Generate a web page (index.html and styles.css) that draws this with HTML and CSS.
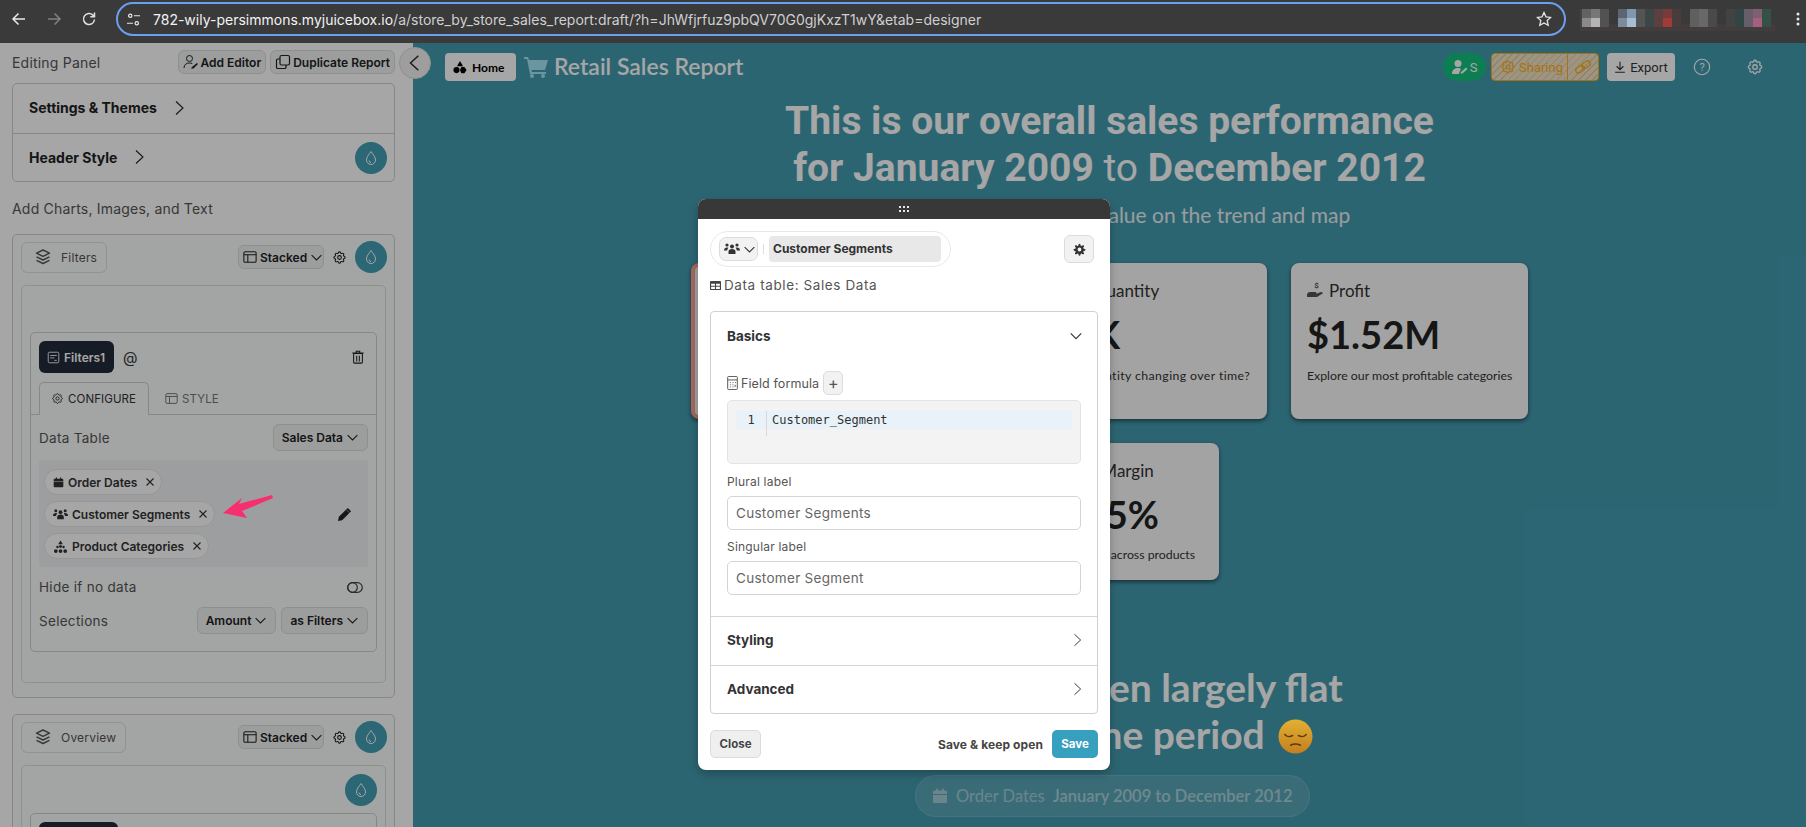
FILE: index.html
```html
<!DOCTYPE html>
<html lang="en">
<head>
<meta charset="utf-8">
<title>Retail Sales Report</title>
<link rel="stylesheet" href="styles.css">
</head>
<body>
<svg class="sprite" aria-hidden="true">
  <symbol id="chev-d" viewBox="0 0 16 16"><path d="M2 5l6 6 6-6" fill="none" stroke="currentColor" stroke-width="1.300"/></symbol>
  <symbol id="chev-r" viewBox="0 0 16 16"><path d="M4 1.500l7 6.500-7 6.500" fill="none" stroke="currentColor" stroke-width="1.100"/></symbol>
  <symbol id="drop" viewBox="0 0 16 16"><path d="M8 1.500C6 4.500 3.500 7 3.500 10a4.500 4.500 0 0 0 9 0C12.500 7 10 4.500 8 1.500z" fill="none" stroke="currentColor" stroke-width="1"/><path d="M6 10.500a2 2 0 0 0 2 2" fill="none" stroke="currentColor" stroke-width="1"/></symbol>
  <symbol id="layers" viewBox="0 0 16 16"><g fill="none" stroke="currentColor" stroke-width="1.400" stroke-linejoin="round"><path d="M8 1L1.500 4.200 8 7.400l6.500-3.200z"/><path d="M1.500 7.800L8 11l6.500-3.200"/><path d="M1.500 11.300L8 14.500l6.500-3.200"/></g></symbol>
  <symbol id="layout" viewBox="0 0 16 16"><g fill="none" stroke="currentColor" stroke-width="1.200"><rect x="1" y="2" width="14" height="12" rx="1.500"/><path d="M1 5.500h14M5.500 5.500V14"/></g></symbol>
  <symbol id="gear" viewBox="0 0 24 24"><g fill="none" stroke="currentColor" stroke-width="1.700"><path d="M10.325 4.317c.426-1.756 2.924-1.756 3.350 0a1.724 1.724 0 0 0 2.573 1.066c1.543-.94 3.310.826 2.370 2.370a1.724 1.724 0 0 0 1.065 2.572c1.756.426 1.756 2.924 0 3.350a1.724 1.724 0 0 0-1.066 2.573c.94 1.543-.826 3.310-2.370 2.370a1.724 1.724 0 0 0-2.572 1.065c-.426 1.756-2.924 1.756-3.350 0a1.724 1.724 0 0 0-2.573-1.066c-1.543.94-3.310-.826-2.370-2.370a1.724 1.724 0 0 0-1.065-2.572c-1.756-.426-1.756-2.924 0-3.350a1.724 1.724 0 0 0 1.066-2.573c-.94-1.543.826-3.310 2.370-2.370c1 .608 2.296.07 2.572-1.065z"/><circle cx="12" cy="12" r="3"/></g></symbol>
  <symbol id="gear-solid" viewBox="0 0 24 24"><path fill="currentColor" fill-rule="evenodd" d="M10.325 2.800c.426-1.756 2.924-1.756 3.350 0l.3 1.400a1.724 1.724 0 0 0 2.573 1.066l1.200-.8c1.543-.94 3.310.826 2.370 2.370l-.8 1.200a1.724 1.724 0 0 0 1.065 2.572l1.400.3c1.756.426 1.756 2.924 0 3.350l-1.400.3a1.724 1.724 0 0 0-1.066 2.573l.8 1.200c.94 1.543-.826 3.310-2.370 2.370l-1.200-.8a1.724 1.724 0 0 0-2.572 1.065l-.3 1.400c-.426 1.756-2.924 1.756-3.350 0l-.3-1.400a1.724 1.724 0 0 0-2.573-1.066l-1.200.8c-1.543.94-3.310-.826-2.370-2.370l.8-1.200a1.724 1.724 0 0 0-1.065-2.572l-1.400-.3c-1.756-.426-1.756-2.924 0-3.350l1.400-.3a1.724 1.724 0 0 0 1.066-2.573l-.8-1.200c-.94-1.543.826-3.310 2.370-2.370l1.200.8a1.724 1.724 0 0 0 2.572-1.065zM12 8.500a3.500 3.500 0 1 0 0 7 3.500 3.500 0 0 0 0-7z"/></symbol>
  <symbol id="x" viewBox="0 0 10 10"><path d="M1.500 1.500l7 7m0-7l-7 7" stroke="currentColor" stroke-width="1.100"/></symbol>
  <symbol id="users" viewBox="0 0 16 16"><g fill="currentColor"><circle cx="8" cy="5.500" r="2"/><circle cx="3" cy="4" r="1.600"/><circle cx="13" cy="4" r="1.600"/><path d="M4.500 13v-2.500c0-1.500 1.200-2.500 3.500-2.500s3.500 1 3.500 2.500V13z"/><path d="M0 9.500C0 7.500 1.200 6.500 3 6.500c.6 0 1.100.1 1.500.3-.8.700-1.200 1.600-1.300 2.700zM16 9.500c0-2-1.200-3-3-3-.6 0-1.100.1-1.500.3.800.7 1.200 1.600 1.300 2.700z"/></g></symbol>
  <symbol id="cubes" viewBox="0 0 16 16"><g fill="currentColor"><path d="M8 1.500l2.500 4h-5z"/><circle cx="8" cy="8" r="1.500"/><circle cx="4.800" cy="8.500" r="1.300"/><circle cx="11.200" cy="8.500" r="1.300"/><circle cx="3" cy="12.800" r="2"/><circle cx="8" cy="12.800" r="2"/><circle cx="13" cy="12.800" r="2"/></g></symbol>
  <symbol id="shapes" viewBox="0 0 16 16"><g fill="currentColor"><path d="M8 1l3.500 6h-7z"/><circle cx="4" cy="11.500" r="3.500"/><path d="M9.500 8h3.500l2.500 3.500-2.500 3.500H9.500L8 11.500z"/></g></symbol>
  <symbol id="cal" viewBox="0 0 16 16"><path fill="currentColor" d="M4 .800h1.800V2.500h4.400V.800H12v1.700h1.500c.8 0 1.500.7 1.500 1.500V6H1V4c0-.8.700-1.500 1.500-1.500H4zM1 7h14v6.500c0 .8-.7 1.500-1.500 1.500h-11C1.700 15 1 14.300 1 13.500z"/></symbol>
  <symbol id="caret-doc" viewBox="0 0 16 16"><g fill="none" stroke="currentColor" stroke-width="1.100"><rect x="1.500" y="1.500" width="13" height="13" rx="1.500"/><path d="M4 5.500h8M4 8.500h3M9 11.500h3M7 8.500l2 0"/></g></symbol>
</svg>

<header class="browser">
  <div class="nav">
    <svg class="nav-ic" viewBox="0 0 16 16"><path d="M14 8H2.500M7.500 2.500L2 8l5.500 5.500" fill="none" stroke="#e8e8e8" stroke-width="1.500"/></svg>
    <svg class="nav-ic" viewBox="0 0 16 16"><path d="M2 8h11.500M8.500 2.500L14 8l-5.500 5.500" fill="none" stroke="#808080" stroke-width="1.500"/></svg>
    <svg class="nav-ic" viewBox="0 0 16 16"><path d="M13.500 8.500a5.500 5.500 0 1 1-1.600-4.400L13.500 5.700M13.500 1.500v4.200H9.300" fill="none" stroke="#e0e0e0" stroke-width="1.500"/></svg>
  </div>
  <div class="urlbar">
    <svg class="tune" viewBox="0 0 16 16"><g fill="none" stroke="#e8e8e8" stroke-width="1.300"><circle cx="4.500" cy="4" r="1.800"/><path d="M8.500 4H15M1 12h6.500"/><circle cx="11.500" cy="12" r="1.800"/></g></svg>
    <div class="url"><span class="url-host">782-wily-persimmons.myjuicebox.io</span><span class="url-path">/a/store_by_store_sales_report:draft/?h=JhWfjrfuz9pbQV70G0gjKxzT1wY&amp;etab=designer</span></div>
    <svg class="star" viewBox="0 0 16 16"><path d="M8 1.500l2 4.400 4.700.5-3.500 3.200 1 4.700L8 11.900l-4.200 2.400 1-4.700L1.300 6.400 6 5.900z" fill="none" stroke="#e8e8e8" stroke-width="1.300"/></svg>
  </div>
  <svg class="exts" width="196" height="32" viewBox="0 0 196 32">
    <rect x="0" y="24" width="195" height="7" fill="#433c3c"/>
    <rect x="-7" y="9" width="9" height="18" fill="#444"/>
    <rect x="2" y="9" width="9" height="9" fill="#636363"/><rect x="11" y="9" width="9" height="9" fill="#777"/><rect x="2" y="18" width="9" height="9" fill="#8a8a8a"/><rect x="11" y="18" width="9" height="9" fill="#b4b4b4"/><rect x="20" y="9" width="9" height="18" fill="#525252"/>
    <rect x="38" y="9" width="9" height="9" fill="#5c6672"/><rect x="47" y="9" width="9" height="9" fill="#7e98b4"/><rect x="38" y="18" width="9" height="9" fill="#7d8c9c"/><rect x="47" y="18" width="9" height="9" fill="#a8bed2"/><rect x="56" y="9" width="9" height="18" fill="#545454"/><rect x="65" y="9" width="9" height="18" fill="#3d4646"/>
    <rect x="74" y="9" width="9" height="18" fill="#5c3f3f"/><rect x="83" y="9" width="9" height="9" fill="#763c3c"/><rect x="83" y="18" width="9" height="9" fill="#a23a3a"/><rect x="92" y="9" width="9" height="18" fill="#483c3c"/>
    <rect x="110" y="9" width="9" height="18" fill="#5f5f5f"/><rect x="119" y="9" width="9" height="18" fill="#686868"/><rect x="128" y="9" width="9" height="18" fill="#4a4a4a"/>
    <rect x="146" y="9" width="9" height="18" fill="#424242"/><rect x="155" y="9" width="9" height="18" fill="#324545"/><rect x="164" y="9" width="9" height="18" fill="#665e68"/><rect x="173" y="9" width="9" height="9" fill="#805f72"/><rect x="173" y="18" width="9" height="9" fill="#a56080"/><rect x="182" y="9" width="9" height="18" fill="#345148"/>
  </svg>
  <svg class="kebab" viewBox="0 0 4 16"><g fill="#e8e8e8"><circle cx="2" cy="3" r="1.500"/><circle cx="2" cy="8" r="1.500"/><circle cx="2" cy="13" r="1.500"/></g></svg>
</header>

<div class="app">
  <aside class="panel">
    <div class="panel-top">
      <span class="muted-title">Editing Panel</span>
      <div class="top-btns">
        <button class="btn btn-sm"><svg class="ic16" viewBox="0 0 16 16"><g fill="none" stroke="currentColor" stroke-width="1"><circle cx="6.500" cy="4.500" r="3"/><path d="M1 14c0-3.500 2.500-5 5.500-5 1 0 2 .2 2.800.6"/></g><path d="M9 13l5-4 1 1-4.500 4.500H8z" fill="currentColor"/></svg>Add Editor</button>
        <button class="btn btn-sm"><svg class="ic16" viewBox="0 0 16 16"><g fill="none" stroke="currentColor" stroke-width="1.200"><rect x="5" y="1.500" width="9.500" height="9.500" rx="1.500"/><path d="M5 5H2.800c-.7 0-1.300.6-1.300 1.300v6.900c0 .7.600 1.300 1.300 1.300h6.900c.7 0 1.300-.6 1.300-1.300V11"/></g></svg>Duplicate Report</button>
      </div>
    </div>

    <section class="box settings">
      <div class="set-row"><strong>Settings &amp; Themes</strong><svg class="chev-r"><use href="#chev-r"/></svg></div>
      <div class="set-row set-row-b"><strong>Header Style</strong><svg class="chev-r"><use href="#chev-r"/></svg><span class="drop drop-end"><svg><use href="#drop"/></svg></span></div>
    </section>

    <p class="muted-title add-title">Add Charts, Images, and Text</p>

    <section class="box stack">
      <div class="stack-head">
        <span class="tab-btn"><svg class="ic16"><use href="#layers"/></svg>Filters</span>
        <button class="btn btn-stacked"><svg class="ic14"><use href="#layout"/></svg>Stacked<svg class="ic-chev"><use href="#chev-d"/></svg></button>
        <svg class="gear-ic"><use href="#gear"/></svg>
        <span class="drop"><svg><use href="#drop"/></svg></span>
      </div>
      <div class="inner inner-filters">
        <div class="widget">
          <div class="widget-head">
            <span class="dark-btn"><svg class="ic13"><use href="#caret-doc"/></svg>Filters1</span>
            <span class="at">@</span>
            <svg class="trash" viewBox="0 0 16 16"><g fill="none" stroke="currentColor" stroke-width="1.200"><path d="M3 4h10v10c0 .6-.4 1-1 1H4c-.6 0-1-.4-1-1zM1.500 3.500h13M6 3V1.500h4V3M6.500 6.500V13M9.500 6.500V13"/></g></svg>
          </div>
          <div class="tabs">
            <span class="tab tab-on"><svg class="ic13"><use href="#gear"/></svg>CONFIGURE</span>
            <span class="tab"><svg class="ic13"><use href="#layout"/></svg>STYLE</span>
          </div>
          <div class="widget-body">
            <div class="field-row"><span class="lbl">Data Table</span><button class="btn btn-sel">Sales Data<svg class="ic-chev"><use href="#chev-d"/></svg></button></div>
            <div class="pills">
              <div class="pill-col">
                <span class="pill"><svg class="ic11"><use href="#cal"/></svg>Order Dates<svg class="ic-x"><use href="#x"/></svg></span>
                <span class="pill"><svg class="ic15"><use href="#users"/></svg>Customer Segments<svg class="ic-x"><use href="#x"/></svg></span>
                <span class="pill"><svg class="ic15"><use href="#cubes"/></svg>Product Categories<svg class="ic-x"><use href="#x"/></svg></span>
              </div>
              <svg class="pencil" viewBox="0 0 16 16"><path d="M11.500 1l3.500 3.500-9.500 9.500L1 15l1-4.500z" fill="currentColor"/><path d="M10 3l3 3" stroke="#a0a2a4" stroke-width="1"/></svg>
            </div>
            <div class="field-row row-hide"><span class="lbl">Hide if no data</span><svg class="toggle" viewBox="0 0 16 11"><g fill="none" stroke="currentColor" stroke-width="1.200"><rect x=".7" y=".7" width="14.600" height="9.600" rx="4.800"/><circle cx="5.500" cy="5.500" r="4.800"/></g></svg></div>
            <div class="field-row row-sel"><span class="lbl">Selections</span><span class="sel-pair"><button class="btn btn-sel">Amount<svg class="ic-chev"><use href="#chev-d"/></svg></button><button class="btn btn-sel">as Filters<svg class="ic-chev"><use href="#chev-d"/></svg></button></span></div>
          </div>
        </div>
      </div>
    </section>

    <section class="box stack stack-two">
      <div class="stack-head">
        <span class="tab-btn"><svg class="ic16"><use href="#layers"/></svg>Overview</span>
        <button class="btn btn-stacked"><svg class="ic14"><use href="#layout"/></svg>Stacked<svg class="ic-chev"><use href="#chev-d"/></svg></button>
        <svg class="gear-ic"><use href="#gear"/></svg>
        <span class="drop"><svg><use href="#drop"/></svg></span>
      </div>
      <div class="inner">
        <div class="inner-drop"><span class="drop"><svg><use href="#drop"/></svg></span></div>
        <div class="widget"><div class="widget-head"><span class="dark-btn dark-wide"></span></div></div>
      </div>
    </section>
  </aside>

  <main class="report">
    <div class="report-bar">
      <button class="home"><svg class="ic14"><use href="#shapes"/></svg>Home</button>
      <svg class="cart" viewBox="0 0 24 22"><path fill="#a6e6f5" d="M0 1h4l1 3h19l-3 10H7.500L8 16h14v2H6L3 3H0z"/><circle cx="8" cy="20" r="2" fill="#a6e6f5"/><circle cx="19" cy="20" r="2" fill="#a6e6f5"/></svg>
      <span class="report-title">Retail Sales Report</span>
      <div class="bar-right">
        <span class="editor"><svg class="ic16" viewBox="0 0 16 16"><circle cx="6" cy="4.500" r="3.500" fill="#fff"/><path d="M0 15c0-4 2.500-6 6-6 1.200 0 2.200.2 3 .7L7.500 13l-.5 2z" fill="#fff"/><path d="M9 13l5-4.500 1.500 1.500-5 4.500H8.500z" fill="#fff"/></svg>S</span>
        <span class="sharing"><span class="share-l"><svg class="ic16"><use href="#gear"/></svg>Sharing</span><span class="share-r"><svg class="ic16" viewBox="0 0 16 16"><g fill="none" stroke="currentColor" stroke-width="1.400"><rect x=".5" y="7.500" width="9" height="5.500" rx="2.750" transform="rotate(-35 5 10.250)"/><rect x="6.500" y="3" width="9" height="5.500" rx="2.750" transform="rotate(-35 11 5.750)"/></g></svg></span></span>
        <button class="export"><svg class="ic12" viewBox="0 0 16 16"><path d="M8 1v10M3.500 7L8 11.500 12.500 7M1.500 15h13" fill="none" stroke="currentColor" stroke-width="1.500"/></svg>Export</button>
        <svg class="help" viewBox="0 0 18 18"><circle cx="9" cy="9" r="7.700" fill="none" stroke="currentColor" stroke-width="1.100"/><text x="9" y="13" text-anchor="middle" class="help-q">?</text></svg>
        <svg class="set-ic"><use href="#gear"/></svg>
      </div>
    </div>

    <h1 class="headline">This is our overall sales performance<br>for January 2009 <span class="thin">to</span> December 2012</h1>
    <p class="sub">Select a metric to see its value on the trend and map</p>

    <div class="kpi-row">
      <article class="kpi kpi-red"></article>
      <article class="kpi kpi-q"><div class="kpi-t"><svg class="ic16"><use href="#cubes"/></svg>Net Quantity</div><div class="kpi-v">2.7K</div><p>How is quantity changing over time?</p></article>
      <article class="kpi kpi-p"><div class="kpi-t"><svg class="hand" viewBox="0 0 18 18"><text x="9.500" y="7" class="hand-d" text-anchor="middle">$</text><path d="M0 14c0-2 1.500-3 3-3h5c1 0 1.500.5 1.500 1s-.5 1-1.500 1H6.500h2l5-1.800c1-.3 2 .1 2.500 1L10 16H0z" fill="currentColor"/></svg>Profit</div><div class="kpi-v">$1.52M</div><p>Explore our most profitable categories</p></article>
    </div>
    <div class="kpi-row">
      <article class="kpi kpi-m"><div class="kpi-t"><svg class="ic16"><use href="#cubes"/></svg>Average Margin</div><div class="kpi-v">-15.35%</div><p>Evaluate margins across products</p></article>
    </div>

    <h2 class="headline-2">Sales have been largely flat<br>over this time period <svg class="emoji" viewBox="0 0 36 36"><defs><linearGradient id="emo" x1="0" y1="0" x2="0" y2="1"><stop offset="0" stop-color="#e2b032"/><stop offset="1" stop-color="#c47f20"/></linearGradient></defs><circle cx="18" cy="18" r="17.500" fill="url(#emo)"/><path d="M7 16c2 2.500 5.500 2.500 8 1M21 17c2.500 1.500 6 1.500 8-1M13 27c3-1.500 7-1.500 10 0" fill="none" stroke="#5b3c10" stroke-width="1.600" stroke-linecap="round"/></svg></h2>
    <div class="filter-chip"><svg class="ic16"><use href="#cal"/></svg><span class="chip-k">Order Dates</span><span class="chip-v">January 2009 to December 2012</span></div>
  </main>

  <button class="collapse"><svg viewBox="0 0 16 16"><path d="M11 1.500L4 8l7 6.500" fill="none" stroke="#2a2a2a" stroke-width="1.300"/></svg></button>
  <div class="overlay"></div>

  <div class="modal">
    <div class="drag"><svg viewBox="0 0 10 7" class="grip"><g fill="#e8e8e8"><rect x="0" y="0" width="2" height="2"/><rect x="4" y="0" width="2" height="2"/><rect x="8" y="0" width="2" height="2"/><rect x="0" y="4" width="2" height="2"/><rect x="4" y="4" width="2" height="2"/><rect x="8" y="4" width="2" height="2"/></g></svg></div>
    <div class="modal-body">
      <div class="name-row">
        <div class="name-pill">
          <span class="ic-btn"><svg class="ic16"><use href="#users"/></svg><svg class="ic-chev"><use href="#chev-d"/></svg></span>
          <span class="sep"></span>
          <span class="name-input">Customer Segments</span>
        </div>
        <span class="gear-btn"><svg class="ic13"><use href="#gear-solid"/></svg></span>
      </div>
      <div class="table-note"><svg class="ic11" viewBox="0 0 12 12"><path fill="#444" fill-rule="evenodd" d="M1 1h10c.6 0 1 .4 1 1v8c0 .6-.4 1-1 1H1c-.6 0-1-.4-1-1V2c0-.6.400-1 1-1zm.2 3.200v2h4.200v-2zm5.400 0v2h4.200v-2zM1.200 7.300v2.400h4.200V7.300zm5.400 0v2.400h4.200V7.300z"/></svg>Data table: Sales Data</div>

      <div class="accordion">
        <div class="acc-open">
          <div class="acc-head"><strong>Basics</strong><svg class="acc-chev"><use href="#chev-d"/></svg></div>
          <div class="formula-label"><svg class="ic14 calc" viewBox="0 0 12 16"><g fill="none" stroke="#444" stroke-width="1"><rect x=".5" y=".5" width="11" height="15" rx="1"/><path d="M.5 4.500h11M3 7.500h1M6 7.500h1M9 7.500h1M3 10h1M6 10h1M3 12.500h1M6 12.500h1M9 10v2.500"/></g></svg>Field formula<span class="plus">+</span></div>
          <div class="code"><div class="code-line"><span class="code-num">1</span><span class="code-text">Customer_Segment</span></div></div>
          <label class="f-label">Plural label</label>
          <div class="f-input">Customer Segments</div>
          <label class="f-label f-label-2">Singular label</label>
          <div class="f-input">Customer Segment</div>
        </div>
        <div class="acc-row"><strong>Styling</strong><svg class="acc-chev"><use href="#chev-r"/></svg></div>
        <div class="acc-row"><strong>Advanced</strong><svg class="acc-chev"><use href="#chev-r"/></svg></div>
      </div>

      <div class="modal-foot">
        <button class="btn-close">Close</button>
        <span class="keep">Save &amp; keep open</span>
        <button class="btn-save">Save</button>
      </div>
    </div>
  </div>

  <svg class="arrow" viewBox="0 0 52 26"><path d="M50 1L17 10l3-6L1 19l24 5-5-7 31-13z" fill="#f72f6e"/></svg>
</div>
</body>
</html>
```
FILE: styles.css
```css
* { box-sizing: border-box; }
html, body { height: 100%; }
body { margin: 0; height: 827px; overflow: hidden; font-family: "Inter", "Liberation Sans", sans-serif; color: #333; background: #fff; }
button { font: inherit; color: inherit; }
p, h1, h2 { margin: 0; }
.sprite { display: none; }
.ic16 { width: 16px; height: 16px; flex: none; }
.ic15 { width: 15px; height: 15px; flex: none; }
.ic14 { width: 14px; height: 14px; flex: none; }
.ic13 { width: 13px; height: 13px; flex: none; }
.ic12 { width: 12px; height: 12px; flex: none; }
.ic11 { width: 11px; height: 11px; flex: none; }
.ic-x { width: 10px; height: 10px; flex: none; margin-left: 4px; }
.ic-chev { width: 13px; height: 13px; flex: none; margin-left: 3px; }

/* browser chrome */
.browser { height: 43px; background: #3a3a3a; display: flex; align-items: flex-start; padding-top: 2px; position: relative; }
.nav { width: 116px; display: flex; padding: 9px 0 0 11px; gap: 19px; }
.nav-ic { width: 16px; height: 16px; }
.urlbar { width: 1450px; height: 34px; border: 2px solid #6b9ff0; border-radius: 17px; display: flex; align-items: center; padding: 0 12px 0 8px; }
.tune { width: 15px; height: 15px; flex: none; margin-right: 12px; }
.url { flex: 1; font-family: "Inter", sans-serif; font-size: 14px; white-space: nowrap; color: #cfcfcf; }
.url-host { color: #f2f2f2; }
.star { width: 16px; height: 16px; flex: none; }
.exts { margin: 0 0 0 14px; flex: none; margin-top: -2px; }
.kebab { width: 4px; height: 16px; margin: 9px 0 0 20px; }

/* app */
.app { position: relative; display: flex; height: 784px; overflow: hidden; }
.overlay { position: absolute; inset: 0; background: rgba(0, 0, 0, .35); }
.panel { width: 413px; flex: none; padding: 7px 18px 0 12px; background: #fff; overflow: hidden; font-size: 13px; color: #222; }
.panel-top { display: flex; justify-content: space-between; align-items: center; height: 24px; }
.muted-title { font-size: 14px; color: #555; letter-spacing: .2px; }
.top-btns { display: flex; gap: 4px; }
.btn { display: inline-flex; align-items: center; font-weight: 600; background: #f0f1f2; border: 1px solid #dcdcdc; border-radius: 6px; padding: 0; color: #222; white-space: nowrap; }
.btn-sm { height: 24px; padding: 0 4px; font-size: 12px; gap: 2px; }
.box { border: 1px solid #d0d0d0; border-radius: 5px; }
.settings { margin-top: 9px; height: 99px; }
.set-row { height: 49px; display: flex; align-items: center; padding: 0 7px 2px 16px; gap: 15px; font-size: 14px; color: #222; }
.set-row-b { border-top: 1px solid #d0d0d0; padding-bottom: 0; }
.set-row-b strong { margin-bottom: 2px; }
.set-row-b .chev-r { margin-bottom: 2px; }
.set-row-b .drop { margin-bottom: 1px; }
.chev-r { width: 16px; height: 16px; }
.drop { width: 32px; height: 32px; border-radius: 50%; background: #449eb4; color: #fff; display: inline-flex; align-items: center; justify-content: center; flex: none; }
.drop svg { width: 16px; height: 16px; }
.drop-end { margin-left: auto; }
.add-title { margin-top: 18px; height: 17px; line-height: 17px; }

.stack { margin-top: 17px; height: 464px; padding: 6px 8px 0; background: #fafcfc; }
.stack-two { margin-top: 16px; height: 200px; }
.stack-head { display: flex; align-items: center; height: 32px; margin-right: -1px; }
.tab-btn { display: flex; align-items: center; height: 31px; padding: 0 9px 0 13px; gap: 10px; border: 1px solid #e0e0e0; border-radius: 6px; font-size: 12px; color: #555; letter-spacing: .2px; margin-right: auto; }
.btn-stacked { height: 24px; width: 86px; padding: 0 4px; font-size: 12px; gap: 3px; }
.btn-stacked .ic-chev { margin-left: 0; }
.gear-ic { width: 15px; height: 15px; flex: none; margin: 0 8px; color: #222; }
.inner { margin-top: 12px; border: 1px solid #dedede; border-radius: 5px; padding: 8px; }
.inner-filters { height: 398px; padding-top: 46px; }
.inner-drop { display: flex; justify-content: flex-end; height: 38px; }
.widget { border: 1px solid #d0d0d0; border-radius: 5px; margin-top: 0; height: 320px; }
.inner-drop + .widget { margin-top: 1px; height: 100px; }
.widget-head { display: flex; align-items: center; padding: 8px 8px 0; height: 40px; }
.dark-btn { display: inline-flex; align-items: center; gap: 4px; height: 32px; width: 75px; padding: 0 8px; background: #232b3b; border-radius: 6px; color: #fff; font-size: 12px; font-weight: 600; }
.dark-wide { width: 79px; }
.at { margin-left: 9px; font-size: 15px; color: #333; }
.trash { width: 14px; height: 14px; margin-left: auto; margin-right: 3px; color: #222; }
.tabs { display: flex; height: 42px; padding: 9px 0 0 8px; border-bottom: 1px solid #d0d0d0; }
.tab { display: flex; align-items: center; gap: 4px; height: 33px; padding: 0 10px 0 11px; font-size: 11.500px; color: #666; letter-spacing: .1px; }
.tab + .tab { margin-left: 5px; color: #777; }
.tab-on { width: 110px; border: 1px solid #d0d0d0; border-bottom: 1px solid #fff; border-radius: 5px 5px 0 0; color: #333; margin-bottom: -1px; }
.widget-body { padding: 9px 8px 0; }
.field-row { display: flex; align-items: center; justify-content: space-between; }
.lbl { font-size: 13.500px; color: #555; letter-spacing: .3px; }
.btn-sel { height: 27px; padding: 0 8px; font-size: 12px; background: #f0f1f2; }
.pills { margin-top: 9px; height: 107px; background: #f2f3f5; border-radius: 3px; display: flex; align-items: center; padding: 9px 5px 8px; }
.pill-col { display: flex; flex-direction: column; align-items: flex-start; gap: 6px; flex: 1; }
.pill { display: inline-flex; align-items: center; height: 26px; padding: 0 6px 0 8px; gap: 4px; background: #fff; border: 1px solid #e6e6e6; border-radius: 13px; font-size: 12px; font-weight: 600; color: #333; white-space: nowrap; }
.pencil { width: 15px; height: 15px; margin-right: 11px; color: #222; }
.row-hide { height: 20px; margin-top: 10px; }
.toggle { width: 16px; height: 11px; color: #444; margin-right: 5px; }
.row-sel { margin-top: 10px; }
.sel-pair { display: flex; gap: 5px; }

/* report */
.report { flex: 1; min-width: 0; background: #449bb0; padding: 10px 0 0; overflow: hidden; color: #fff; }
.report-bar { display: flex; align-items: center; height: 28px; padding: 0 42px 0 32px; }
.home { display: inline-flex; align-items: center; gap: 5px; height: 28px; width: 71px; padding: 0 8px; background: #fff; border: 0; border-radius: 4px; font-size: 12px; font-weight: 700; color: #000; font-family: "Lato", sans-serif; }
.cart { width: 24px; height: 22px; margin-left: 8px; }
.report-title { margin-left: 6px; padding-bottom: 2px; font-family: "Lato", sans-serif; font-size: 23px; font-weight: 600; color: #fff; }
.bar-right { margin-left: auto; display: flex; align-items: center; }
.editor { width: 43px; height: 28px; border-radius: 14px; background: #14c07f; display: flex; align-items: center; justify-content: center; gap: 2px; font-size: 13px; font-family: "Roboto", sans-serif; color: #fff; margin-right: 5px; }
.sharing { width: 108px; height: 28px; display: flex; color: #ffb020; border: 1px solid #ffb020; border-radius: 4px; font-family: "Roboto", sans-serif; font-size: 13px; background: repeating-linear-gradient(135deg, #f3e3c8 0 4px, #e2ca9e 4px 5px); }
.share-l { width: 76px; display: flex; align-items: center; gap: 3px; padding-left: 8px; border-right: 1px solid #ffb020; }
.share-r { flex: 1; display: flex; align-items: center; justify-content: center; }
.export { width: 68px; height: 28px; margin-left: 8px; background: #fff; border: 0; border-radius: 4px; display: inline-flex; align-items: center; justify-content: center; gap: 4px; font-family: "Roboto", sans-serif; font-size: 13px; color: #333; }
.help { width: 18px; height: 18px; margin-left: 18px; color: #fff; }
.help-q { font-size: 11px; font-family: "Roboto", sans-serif; fill: #fff; }
.set-ic { width: 18px; height: 18px; margin-left: 35px; color: #fff; }

.headline { margin-top: 17px; text-align: center; font-family: "Roboto", sans-serif; font-weight: 700; font-size: 39px; line-height: 47px; color: #fff; }
.thin { font-weight: 400; }
.sub { margin-top: 10px; text-align: center; font-family: "Lato", sans-serif; font-size: 21px; line-height: 26px; color: #eaf2f4; }
.kpi-row { display: flex; justify-content: center; gap: 24px; margin-top: 35px; }
.kpi-row + .kpi-row { margin-top: 24px; }
.kpi { background: #fbfbfb; border-radius: 8px; padding: 15px 16px; color: #222; box-shadow: 0 2px 4px rgba(0, 0, 0, .5); font-family: "Lato", sans-serif; height: 156px; flex: none; }
.kpi p { margin-top: 9px; font-size: 12.300px; color: #333; white-space: nowrap; }
.kpi-t { display: flex; align-items: center; gap: 4px; font-size: 17px; height: 24px; color: #333; }
.kpi-v { margin-top: 7px; font-size: 38px; font-weight: 700; line-height: 50px; color: #222; white-space: nowrap; }
.kpi-red { width: 310px; border: 4px solid #ff9e90; }
.kpi-q { width: 242px; }
.kpi-q p { letter-spacing: .4px; }
.kpi-p { width: 237px; }
.kpi-m { width: 218px; height: 137px; }
.kpi-m p { margin-top: 8px; }
.hand { width: 18px; height: 18px; color: #555; }
.hand-d { font-size: 8px; fill: #555; font-family: "Roboto", sans-serif; font-weight: 700; }
.headline-2 { margin-top: 84px; text-align: center; font-family: "Lato", sans-serif; font-weight: 700; font-size: 39px; line-height: 47px; color: #fff; }
.emoji { width: 35px; height: 35px; margin-left: 4px; vertical-align: -5px; position: relative; z-index: 1; }
.filter-chip { width: 395px; height: 42px; margin: 17px 0 0 502px; border-radius: 21px; background: rgba(255, 255, 255, .12); border: 1px solid rgba(255, 255, 255, .12); display: flex; align-items: center; padding-left: 16px; gap: 8px; font-family: "Lato", sans-serif; font-size: 16.500px; color: rgba(255, 255, 255, .45); white-space: nowrap; }
.chip-v { color: rgba(255, 255, 255, .5); font-weight: 600; }

.collapse { position: absolute; left: 399px; top: 4px; width: 32px; height: 32px; border-radius: 50%; background: #f3f3f3; border: 1px solid #ddd; padding: 6px; display: flex; }
.collapse svg { width: 18px; height: 18px; }

/* modal */
.modal { position: absolute; left: 698px; top: 156px; width: 412px; height: 571px; background: #fff; border-radius: 8px; overflow: hidden; box-shadow: 0 4px 10px rgba(0, 0, 0, .25); color: #333; }
.drag { height: 20px; background: #383838; display: flex; align-items: center; justify-content: center; }
.grip { width: 10px; height: 7px; }
.modal-body { padding: 12px 12px 0; }
.name-row { display: flex; align-items: center; justify-content: space-between; padding-right: 4px; }
.name-pill { width: 241px; height: 36px; border: 1px solid #e8e8e8; border-radius: 18px; display: flex; align-items: center; padding-left: 8px; }
.ic-btn { width: 39px; height: 24px; border: 1px solid #dcdcdc; background: #f2f2f2; border-radius: 7px; display: flex; align-items: center; padding-left: 4px; }
.ic-btn .ic-chev { margin-left: 3px; }
.sep { width: 1px; height: 10px; background: #ddd; margin: 0 5px 0 5px; }
.name-input { width: 172px; height: 26px; background: #e8e8e8; border-radius: 4px; padding-left: 4px; line-height: 26px; font-size: 12px; font-weight: 700; color: #333; white-space: nowrap; }
.gear-btn { width: 30px; height: 28px; border: 1px solid #dcdcdc; background: #f2f2f2; border-radius: 6px; display: flex; align-items: center; justify-content: center; color: #333; }
.table-note { display: flex; align-items: center; gap: 3px; margin-top: 8px; height: 20px; font-size: 13.500px; color: #555; letter-spacing: .6px; }
.accordion { margin-top: 16px; height: 403px; border: 1px solid #d0d0d0; border-radius: 4px; }
.acc-open { height: 304px; padding: 0 16px; }
.acc-head { display: flex; align-items: center; justify-content: space-between; height: 50px; font-size: 13.500px; padding-bottom: 2px; margin-right: -2px; }
.acc-chev { width: 14px; height: 14px; }
.formula-label { display: flex; align-items: center; gap: 3px; margin-top: 9px; height: 24px; font-size: 12.500px; color: #555; letter-spacing: .1px; }
.calc { width: 11px; height: 14px; }
.plus { width: 20px; height: 24px; margin-left: 1px; border: 1px solid #dcdcdc; border-radius: 5px; background: #f2f2f2; display: flex; align-items: center; justify-content: center; font-size: 16px; }
.code { margin-top: 5px; height: 64px; background: #f3f3f3; border: 1px solid #e3e3e3; border-radius: 5px; padding: 10px 8px 0; }
.code-line { display: flex; height: 18px; background: #e8f2f8; align-items: center; font-family: "DejaVu Sans Mono", "Liberation Mono", monospace; font-size: 12px; color: #333; }
.code-num { width: 30px; text-align: center; box-shadow: 1px 0 0 #d8d8d8; height: 25px; line-height: 18px; align-self: flex-start; }
.code-text { padding-left: 6px; line-height: 18px; }
.f-label { display: block; margin-top: 10px; height: 16px; line-height: 16px; font-size: 12px; color: #555; letter-spacing: .2px; }
.f-label-2 { margin-top: 9px; }
.f-input { margin-top: 6px; height: 34px; border: 1px solid #d4d4d4; border-radius: 5px; line-height: 32px; padding-left: 8px; font-size: 13.500px; color: #666; letter-spacing: .3px; }
.acc-row { display: flex; align-items: center; justify-content: space-between; height: 49px; border-top: 1px solid #d4d4d4; padding: 0 12px 2px 16px; font-size: 13.500px; }
.modal-foot { display: flex; align-items: center; margin-top: 16px; }
.btn-close { width: 51px; height: 28px; border: 1px solid #dcdcdc; background: #efefef; border-radius: 5px; font-size: 11.500px; font-weight: 700; color: #444; padding: 0; }
.keep { margin-left: auto; font-size: 12px; font-weight: 700; color: #444; letter-spacing: .1px; }
.btn-save { width: 46px; height: 28px; margin-left: 9px; border: 0; background: #37a0bf; color: #fff; border-radius: 5px; font-size: 11.500px; font-weight: 700; padding: 0; }
.arrow { position: absolute; left: 222px; top: 451px; width: 52px; height: 26px; }
```
